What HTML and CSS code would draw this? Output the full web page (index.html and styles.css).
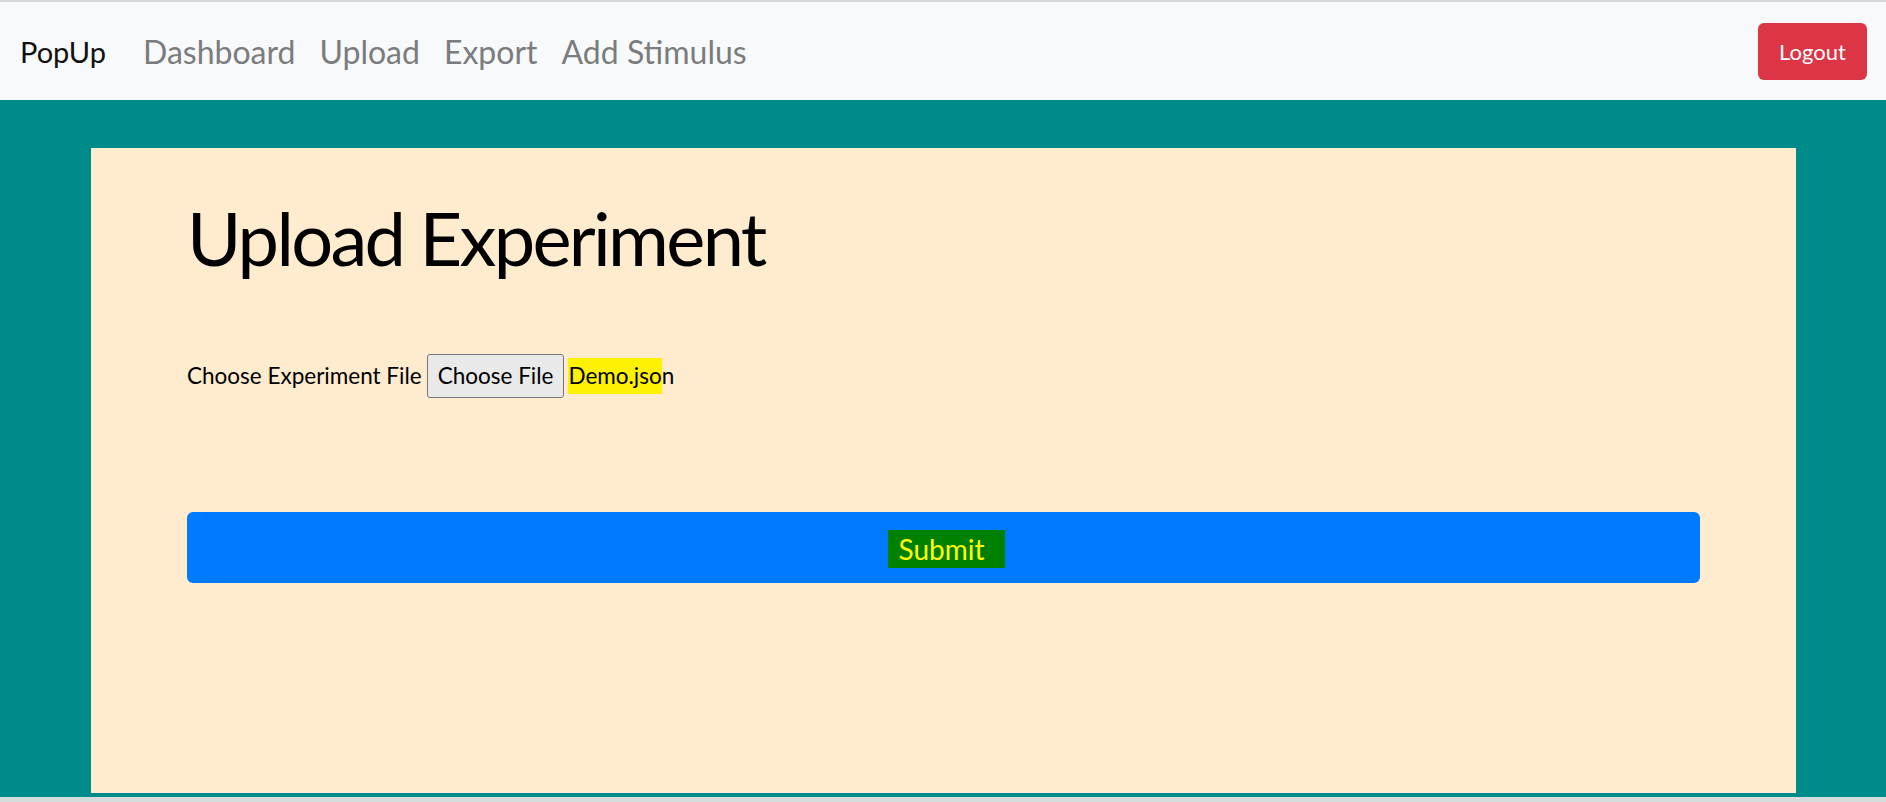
FILE: index.html
```html
<!DOCTYPE html>
<html lang="en">
<head>
<meta charset="utf-8">
<title>PopUp - Upload</title>
<link rel="stylesheet" href="styles.css">
</head>
<body>
<nav class="navbar">
  <a class="brand" href="#">PopUp</a>
  <ul class="nav-links">
    <li><a href="#">Dashboard</a></li>
    <li><a href="#">Upload</a></li>
    <li><a href="#">Export</a></li>
    <li><a href="#">Add Stimulus</a></li>
  </ul>
  <button class="btn-logout" type="button">Logout</button>
</nav>
<main class="page">
  <section class="card">
    <h1 class="title">Upload Experiment</h1>
    <form class="upload-form">
      <div class="file-row">
        <label class="file-label">Choose Experiment File</label>
        <span class="file-btn">Choose File</span>
        <span class="file-name"><span class="mark">Demo.jso</span>n</span>
      </div>
      <button class="btn-submit" type="button"><span class="submit-mark">Submit</span></button>
    </form>
  </section>
</main>
<div class="bottom-line"></div>
</body>
</html>
```
FILE: styles.css
```css
html, body {
  margin: 0;
  padding: 0;
}
body {
  background: #008b8b;
  font-family: Lato, "Open Sans", sans-serif;
  color: #000;
  height: 802px;
  overflow: hidden;
}
.navbar {
  display: flex;
  align-items: center;
  height: 98px;
  border-top: 2px solid #d9d9d9;
  background: #f8f9fa;
  padding: 0 19px 0 20px;
}
.brand {
  font-size: 29px;
  color: #111;
  text-decoration: none;
  margin-right: 37px;
}
.nav-links {
  display: flex;
  gap: 24px;
  list-style: none;
  margin: 0;
  padding: 0;
  flex: 1;
}
.nav-links a {
  font-size: 32px;
  color: #7b7c7d;
  text-decoration: none;
}
.btn-logout {
  width: 109px;
  height: 57px;
  border: none;
  border-radius: 6px;
  background: #dc3545;
  color: #fff;
  font-family: inherit;
  font-size: 22px;
}
.page {
  padding-top: 48px;
}
.card {
  width: 1705px;
  height: 645px;
  margin-left: 91px;
  box-sizing: border-box;
  background: #ffebcd;
  padding: 46px 96px 0;
}
.title {
  margin: 0;
  font-size: 74px;
  line-height: 1.2;
  font-weight: 400;
  letter-spacing: -2.7px;
}
.upload-form {
  margin-top: 71px;
}
.file-row {
  display: flex;
  align-items: center;
  font-size: 22.5px;
  height: 44px;
}
.file-label {
  margin-right: 5px;
}
.file-btn {
  display: flex;
  align-items: center;
  box-sizing: border-box;
  height: 44px;
  padding: 0 10px;
  background: #e9e9e9;
  border: 1px solid #777;
  border-radius: 3px;
  margin-right: 4px;
}
.mark {
  background: #fff200;
  padding: 4px 0 5px;
}
.btn-submit {
  display: flex;
  align-items: center;
  justify-content: center;
  width: 100%;
  height: 71px;
  margin-top: 114px;
  border: none;
  border-radius: 6px;
  background: #007bff;
  font-family: inherit;
  font-size: 28px;
  padding: 0;
}
.submit-mark {
  background: #008000;
  color: #ffff00;
  padding: 2px 20px 2px 11px;
  margin-left: 5px;
  margin-top: 4px;
}
.bottom-line {
  margin-top: 4px;
  height: 5px;
  background: #d5dcdc;
}
```
